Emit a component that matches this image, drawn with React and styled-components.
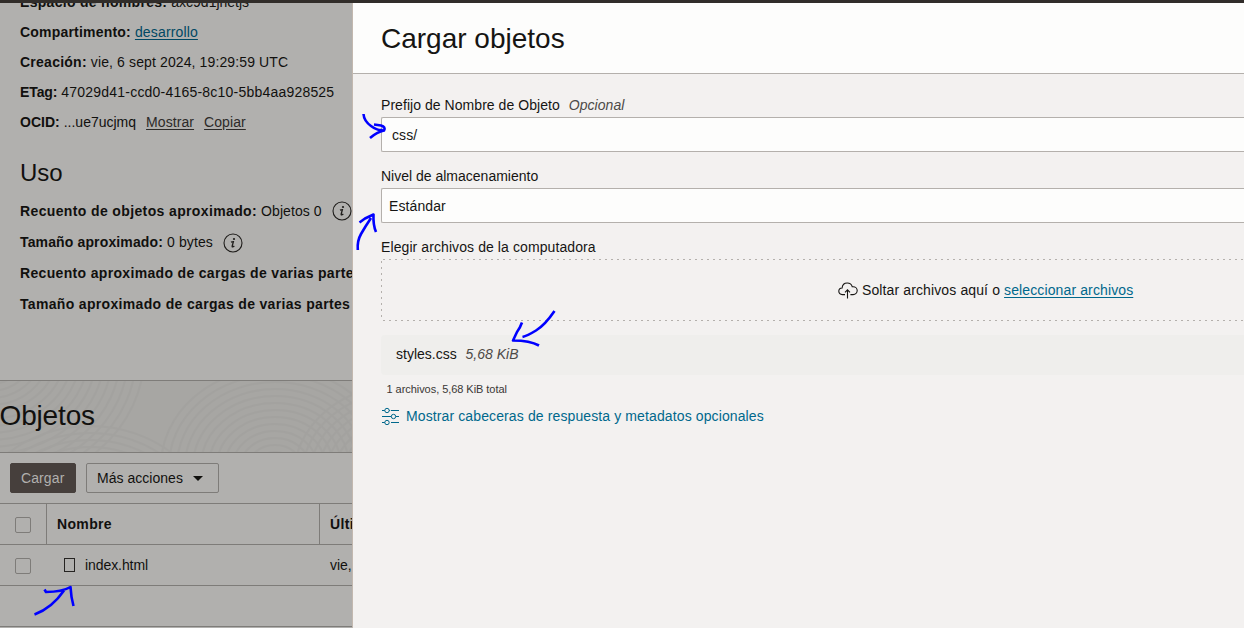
import React from "react";
import styled, { createGlobalStyle } from "styled-components";

const GlobalStyle = createGlobalStyle`
  * { box-sizing: border-box; }
  body {
    margin: 0;
    overflow: hidden;
    font-family: "Liberation Sans", Arial, sans-serif;
    font-size: 14px;
    color: #161513;
  }
`;

const Page = styled.div`
  position: relative;
  display: flex;
  flex-direction: column;
  width: 1244px;
  height: 628px;
  overflow: hidden;
`;

const TopBar = styled.div`
  flex: none;
  height: 3px;
  background: #312d2a;
`;

const Columns = styled.div`
  display: flex;
  flex: 1;
  min-height: 0;
`;

const Backdrop = styled.div`
  display: flex;
  flex-direction: column;
  flex: none;
  width: 353px;
  overflow: hidden;
  white-space: nowrap;
  background: #b1b0ae;
  border-right: 1px solid #c2b8af;
  color: #11100e;
`;

const Details = styled.div`
  flex: none;
  height: 377px;
  padding-left: 20px;
  overflow: hidden;
`;

const InfoList = styled.div`
  margin-top: -16px;
`;

const InfoRow = styled.div`
  height: 30px;
  line-height: 30px;
`;

const StatRow = styled.div`
  display: flex;
  align-items: center;
  height: 31px;
  svg { flex: none; margin: ${(p) => p.$iconDrop || 0}px 0 0 10px; }
`;

const Label = styled.b`
  letter-spacing: ${(p) => p.$spacing || 0}px;
  margin-right: ${(p) => p.$gap || 4}px;
`;

const Tracked = styled.span`
  letter-spacing: ${(p) => p.$spacing}px;
`;

const PlainLink = styled.a`
  color: #2c2a28;
  letter-spacing: 0.08px;
  text-decoration: underline;
  text-underline-offset: 2px;
  margin-left: 10px;
`;

const DimLink = styled.a`
  color: #004863;
  letter-spacing: 0.15px;
  text-decoration: underline;
  text-underline-offset: 2px;
`;

const UsageTitle = styled.h2`
  margin: 20px 0 6px;
  height: 32px;
  line-height: 32px;
  font-size: 24px;
  font-weight: 400;
`;

const ObjectsHeader = styled.div`
  position: relative;
  display: flex;
  align-items: center;
  flex: none;
  height: 73px;
  background: #a7a6a3;
  border-top: 1px solid #7e7c79;
  border-bottom: 1px solid #7e7c79;
  overflow: hidden;
`;

const Texture = styled.svg`
  position: absolute;
  inset: 0;
`;

const ObjectsTitle = styled.h1`
  position: relative;
  margin: 0 0 2px -0.5px;
  font-size: 28px;
  line-height: 34px;
  font-weight: 400;
  letter-spacing: -0.15px;
`;

const Toolbar = styled.div`
  display: flex;
  flex: none;
  gap: 10px;
  height: 50px;
  padding: 10px;
`;

const Button = styled.button`
  display: flex;
  align-items: center;
  height: 30px;
  width: ${(p) => p.$width}px;
  padding: 0 10px;
  border: 1px solid ${(p) => (p.$primary ? "#463f3c" : "#7e7c79")};
  border-radius: 2px;
  background: ${(p) => (p.$primary ? "#463f3c" : "transparent")};
  color: ${(p) => (p.$primary ? "#b1b0ae" : "#11100e")};
  font: inherit;
  letter-spacing: ${(p) => (p.$primary ? 0.1 : 0.03)}px;
  svg { margin-left: 10px; }
`;

const Table = styled.div`
  display: flex;
  flex-direction: column;
  flex: none;
  height: 124px;
  border-top: 1px solid #7e7c79;
  border-bottom: 1px solid #7e7c79;
`;

const TableRow = styled.div`
  display: grid;
  grid-template-columns: 47px 273px 60px;
  height: 41px;
  border-bottom: 1px solid #7e7c79;
  font-weight: ${(p) => (p.$head ? 700 : 400)};
  letter-spacing: ${(p) => (p.$head ? 0.35 : -0.08)}px;
`;

const Cell = styled.div`
  display: flex;
  align-items: center;
  padding: 0 0 1px ${(p) => (p.$check ? 15 : 10)}px;
  border-right: ${(p) => (p.$ruled ? "1px solid #7e7c79" : "0")};
`;

const Checkbox = styled.span`
  width: 16px;
  height: 16px;
  margin-top: 3px;
  border: 1px solid #7e7c79;
  border-radius: 2px;
`;

const FileGlyph = styled.span`
  width: 11px;
  height: 14px;
  margin: 1px 10px 0 7px;
  border: 1px solid #252321;
`;

const Drawer = styled.div`
  display: flex;
  flex-direction: column;
  flex: 1;
  min-width: 0;
  background: #f3f1f0;
`;

const DrawerHeader = styled.div`
  flex: none;
  height: 71px;
  padding: 19px 0 0 28px;
  background: #fdfdfc;
  border-bottom: 1px solid #b4b0ac;
  font-size: 28px;
  line-height: 34px;
`;

const Form = styled.div`
  display: flex;
  flex-direction: column;
  padding: 20px 0 0 28px;
  white-space: nowrap;
`;

const FieldLabel = styled.div`
  height: 23px;
  line-height: 22px;
  letter-spacing: ${(p) => p.$spacing || 0}px;
`;

const Muted = styled.i`
  margin-left: 5px;
  color: #4d4a47;
`;

const Field = styled.div`
  height: 35px;
  margin-bottom: 13px;
  padding-left: ${(p) => p.$inset}px;
  line-height: 34px;
  background: #fdfdfc;
  border: 1px solid #b4b0ac;
  border-right: 0;
  border-radius: 2px 0 0 2px;
  letter-spacing: 0.1px;
`;

const DropZone = styled.div`
  display: flex;
  align-items: center;
  height: 62px;
  padding-left: 457px;
  letter-spacing: 0.12px;
  background-image:
    repeating-linear-gradient(90deg, transparent 0 2px, #b4b0ac 2px 4px, transparent 4px 6px),
    repeating-linear-gradient(90deg, transparent 0 2px, #b4b0ac 2px 4px, transparent 4px 6px),
    repeating-linear-gradient(180deg, transparent 0 2px, #b4b0ac 2px 4px, transparent 4px 6px);
  background-size: 100% 1px, 100% 1px, 1px 100%;
  background-position: top left, bottom left, top left;
  background-repeat: no-repeat;
  svg { margin-right: 4px; }
`;

const SelectLink = styled.a`
  margin-left: 4px;
  color: #00688c;
  text-decoration: underline;
  text-underline-offset: 2px;
`;

const FileRow = styled.div`
  height: 40px;
  margin-top: 14px;
  padding-left: 15px;
  line-height: 38px;
  background: #efeeec;
  border-radius: 4px 0 0 4px;
`;

const Summary = styled.div`
  height: 28px;
  padding-left: 5.5px;
  font-size: 11px;
  line-height: 28px;
  letter-spacing: -0.05px;
  color: #3a3735;
`;

const OptionsLink = styled.a`
  display: flex;
  align-items: center;
  height: 26px;
  color: #00688c;
  letter-spacing: 0.115px;
  svg { margin-right: 6px; }
`;

const Annotations = styled.svg`
  position: absolute;
  inset: 0;
  pointer-events: none;
`;

const InfoIcon = () => (
  <svg width="20" height="20" viewBox="0 0 20 20" fill="none">
    <circle cx="10" cy="10" r="9" stroke="#1f1d1b" strokeWidth="1.1" />
    <circle cx="11" cy="6" r="1.1" fill="#1f1d1b" />
    <path d="M8 9.2q1.200-.6 2.400-.6L9.200 13q-.2 1.100.6.9.9-.3 1.500-1" stroke="#1f1d1b" strokeWidth="1.3" />
  </svg>
);

const CloudIcon = () => (
  <svg width="20" height="17" viewBox="0 0 20 17" fill="none" stroke="#161513" strokeWidth="1.1">
    <path d="M7 12.6H4.3C2.2 12.6.8 11.1.8 9.3c0-1.9 1.4-3.2 3.3-3.3C4.4 3 6.5 1 9.2 1c2.5 0 4.4 1.500 5 3.7h.9c2.3 0 4.1 1.7 4.1 3.9s-1.8 4-4.1 4h-2.7" />
    <path d="M9.5 16.5V7.800M7 10.300l2.500-2.500 2.500 2.500" />
  </svg>
);

const SlidersIcon = () => (
  <svg width="19" height="18" viewBox="0 0 19 18" fill="none" stroke="#00688c" strokeWidth="1">
    <path d="M1 3.5h2.8M8.2 3.5h1M10 3.5H18M1 9.5h9.3M14.700 9.500H18M1 15.5h2.8M10 15.5H18" />
    <circle cx="6" cy="3.5" r="2.2" />
    <circle cx="12.5" cy="9.5" r="2.2" />
    <circle cx="6" cy="15.5" r="2.2" />
  </svg>
);

const rings = [
  [-10, -25, 18], [90, 150, 14], [275, 85, 13], [400, 95, 12],
];

export default function App() {
  return (
    <Page>
      <GlobalStyle />
      <TopBar />
      <Columns>
        <Backdrop>
          <Details>
            <InfoList>
              <InfoRow><Label $spacing={0.3}>Espacio de nombres:</Label>axc9d1jhetjs</InfoRow>
              <InfoRow><Label $spacing={0.2}>Compartimento:</Label><DimLink>desarrollo</DimLink></InfoRow>
              <InfoRow><Label $spacing={0.25}>Creación:</Label><Tracked $spacing={0.12}>vie, 6 sept 2024, 19:29:59 UTC</Tracked></InfoRow>
              <InfoRow><Label $spacing={-0.1} $gap={4}>ETag:</Label><Tracked $spacing={0.21}>47029d41-ccd0-4165-8c10-5bb4aa928525</Tracked></InfoRow>
              <InfoRow><Label>OCID:</Label>...ue7ucjmq<PlainLink>Mostrar</PlainLink><PlainLink>Copiar</PlainLink></InfoRow>
            </InfoList>
            <UsageTitle>Uso</UsageTitle>
            <StatRow><Label $spacing={0.37}>Recuento de objetos aproximado:</Label><Tracked $spacing={0.08}>Objetos 0</Tracked><InfoIcon /></StatRow>
            <StatRow $iconDrop={2}><Label $spacing={0.14}>Tamaño aproximado:</Label><Tracked $spacing={0.1}>0 bytes</Tracked><InfoIcon /></StatRow>
            <StatRow><Label $spacing={0.33}>Recuento aproximado de cargas de varias partes:</Label></StatRow>
            <StatRow><Label $spacing={0.33}>Tamaño aproximado de cargas de varias partes</Label></StatRow>
          </Details>
          <ObjectsHeader>
            <Texture width="353" height="71" fill="none" stroke="#9e9d9b" strokeWidth="2" opacity=".4">
              {rings.map(([x, y, count]) =>
                Array.from({ length: count }, (_, i) => (
                  <ellipse key={`${x}-${i}`} cx={x} cy={y} rx={18 + i * 8} ry={14 + i * 7} />
                ))
              )}
            </Texture>
            <ObjectsTitle>Objetos</ObjectsTitle>
          </ObjectsHeader>
          <Toolbar>
            <Button $primary $width={66}>Cargar</Button>
            <Button $width={133}>
              Más acciones
              <svg width="10" height="5" viewBox="0 0 10 5"><path d="M0 0h10L5 5z" fill="#11100e" /></svg>
            </Button>
          </Toolbar>
          <Table>
            <TableRow $head>
              <Cell $check $ruled><Checkbox /></Cell>
              <Cell $ruled>Nombre</Cell>
              <Cell>Última modificación</Cell>
            </TableRow>
            <TableRow>
              <Cell $check><Checkbox /></Cell>
              <Cell><FileGlyph />index.html</Cell>
              <Cell>vie, 6 sept</Cell>
            </TableRow>
          </Table>
        </Backdrop>
        <Drawer>
          <DrawerHeader>Cargar objetos</DrawerHeader>
          <Form>
            <FieldLabel $spacing={0.05}>Prefijo de Nombre de Objeto <Muted>Opcional</Muted></FieldLabel>
            <Field $inset={10}>css/</Field>
            <FieldLabel>Nivel de almacenamiento</FieldLabel>
            <Field $inset={7}>Estándar</Field>
            <FieldLabel $spacing={0.09}>Elegir archivos de la computadora</FieldLabel>
            <DropZone>
              <CloudIcon />
              Soltar archivos aquí o<SelectLink>seleccionar archivos</SelectLink>
            </DropZone>
            <FileRow>styles.css <Muted>5,68 KiB</Muted></FileRow>
            <Summary>1 archivos, 5,68 KiB total</Summary>
            <OptionsLink><SlidersIcon />Mostrar cabeceras de respuesta y metadatos opcionales</OptionsLink>
          </Form>
        </Drawer>
      </Columns>
      <Annotations width="1244" height="628" fill="none" stroke="#0000ff" strokeWidth="2.6" strokeLinejoin="round">
        <path d="M363.5 114Q364 121 371 126T383 130M374 124.5L381 125.5Q386 127 384 130.5Q377 132 370 138" />
        <path d="M357.8 250Q357 241 361 234T371 218M359.5 222.5L365 218.5 373.5 214.5Q373 225 376 232" />
        <path d="M554.5 311Q545 325 536 330.5T522.5 337M522 322.5Q520 328 517 332L513 340.5Q530 340.5 539 345.5" />
        <path d="M34.5 614.5Q52 608 64 590.5M44.5 589.5L46 592Q62 592 70.5 587Q71 597 73.5 606" />
      </Annotations>
    </Page>
  );
}
